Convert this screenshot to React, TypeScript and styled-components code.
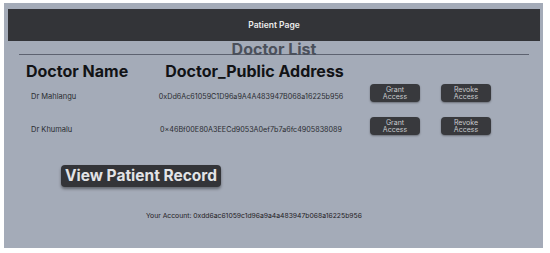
import React from 'react'
import styled, { createGlobalStyle } from 'styled-components'

const doctors = [
  { name: 'Dr Mahlangu', address: '0xDd6Ac61059C1D96a9A4A483947B068a16225b956' },
  { name: 'Dr Khumalu', address: '0×46Bf00E80A3EECd9053A0ef7b7a6fc4905838089' },
]

const GlobalStyle = createGlobalStyle`
  html, body {
    margin: 0;
    padding: 0;
    background: #ffffff;
  }
  body {
    font-family: Inter, "Liberation Sans", sans-serif;
  }
`

const Page = styled.div`
  width: 550px;
  height: 253px;
  padding: 3px 7px 5px 4px;
  box-sizing: border-box;
`

const Panel = styled.div`
  height: 100%;
  background: #a4abb8;
  padding: 6px 3px 0 4px;
  box-sizing: border-box;
  display: flex;
  flex-direction: column;
`

const TopBar = styled.div`
  height: 32px;
  background: #333438;
  color: #ececec;
  font-size: 8.5px;
  font-weight: 600;
  display: flex;
  align-items: center;
  justify-content: center;
`

const TitleRule = styled.div`
  margin: 0 11px 0 11px;
  height: 13px;
  border-bottom: 1px solid #5d6270;
  display: flex;
  justify-content: center;
  align-items: flex-end;
`

const Title = styled.h2`
  margin: 0 0 -3px 0;
  font-size: 16px;
  line-height: 16px;
  font-weight: 700;
  color: #4b505b;
`

const HeadRow = styled.div`
  display: flex;
  padding: 7px 0 0 18px;
  gap: 37px;
`

const HeadCell = styled.div`
  font-size: 16px;
  line-height: 18px;
  font-weight: 700;
  color: #121316;
`

const Row = styled.div<{ $top: number }>`
  display: grid;
  grid-template-columns: 120px 219px 71px 50px;
  align-items: center;
  padding: ${p => p.$top}px 0 0 23px;
`

const Name = styled.div`
  font-size: 7.5px;
  color: #2a2c31;
  padding-top: 6px;
`

const Address = styled.div`
  font-size: 7.2px;
  color: #2a2c31;
  text-align: center;
  padding: 6px 19px 0 0;
  white-space: nowrap;
`

const SmallButton = styled.button`
  width: 50px;
  height: 18px;
  border: none;
  border-radius: 4px;
  background: #38393d;
  color: #c9cacd;
  font-family: inherit;
  font-size: 7px;
  line-height: 7.5px;
  padding: 0;
  box-shadow: 0 1px 2px rgba(0, 0, 0, 0.35);
`

const BigButton = styled.button`
  align-self: flex-start;
  margin: 30px 0 0 53px;
  width: 160px;
  height: 22px;
  padding: 0;
  border: none;
  border-radius: 4px;
  background: #333438;
  color: #e2e3e6;
  font-family: inherit;
  font-size: 15.5px;
  font-weight: 700;
  line-height: 22px;
  box-shadow: 0 2px 3px rgba(0, 0, 0, 0.4);
`

const Account = styled.div`
  margin: 24px 0 0 138px;
  font-size: 6.8px;
  color: #1f2024;
`

export default function App() {
  return (
    <>
      <GlobalStyle />
      <Page>
        <Panel>
          <TopBar>Patient Page</TopBar>
          <TitleRule>
            <Title>Doctor List</Title>
          </TitleRule>
          <HeadRow>
            <HeadCell>Doctor Name</HeadCell>
            <HeadCell>Doctor_Public Address</HeadCell>
          </HeadRow>
          {doctors.map((d, i) => (
            <Row key={d.address} $top={i === 0 ? 4 : 15}>
              <Name>{d.name}</Name>
              <Address>{d.address}</Address>
              <SmallButton>Grant<br />Access</SmallButton>
              <SmallButton>Revoke<br />Access</SmallButton>
            </Row>
          ))}
          <BigButton>View Patient Record</BigButton>
          <Account>Your Account: 0xdd6ac61059c1d96a9a4a483947b068a16225b956</Account>
        </Panel>
      </Page>
    </>
  )
}
